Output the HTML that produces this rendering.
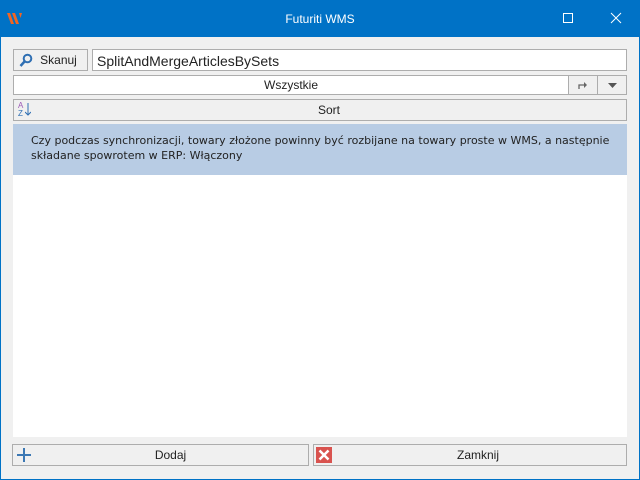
<!DOCTYPE html>
<html><head><meta charset="utf-8"><style>
*{margin:0;padding:0;box-sizing:border-box}
body{width:640px;height:480px;overflow:hidden;background:#0072c6;font-family:"Liberation Sans",sans-serif;font-size:12px;color:#222}
.title{position:absolute;left:0;top:0;width:640px;height:37px;background:#0072c6;color:#fff}
.title .t{position:absolute;left:0;width:640px;top:12px;text-align:center;font-size:12px}
.win{position:absolute;left:1px;top:37px;width:638px;height:442px;background:#f0f0f0}
.b{position:absolute;border:1px solid #adadad;background:#f0f0f0}
.w{background:#fff}
.c{display:flex;align-items:center;justify-content:center}
</style></head><body>
<div class="title">
<svg style="position:absolute;left:6px;top:10px" width="18" height="16" viewBox="0 0 18 16"><g fill="#f26522"><path d="M1 3h3l4 11h-3z"/><path d="M6 3h3l4 11h-3z"/><path d="M13 3h3l-1.5 5z"/></g></svg>
<div class="t">Futuriti WMS</div>
<div style="position:absolute;left:563px;top:13px;width:10px;height:10px;border:1px solid #fff"></div>
<svg style="position:absolute;left:610px;top:12px" width="12" height="12"><path d="M1 1L11 11M11 1L1 11" stroke="#fff" stroke-width="1"/></svg>
</div>
<div class="win">
<div class="b c" style="left:12px;top:12px;width:75px;height:22px">
<svg style="position:absolute;left:5px;top:3px" width="14" height="15"><circle cx="8.5" cy="5.5" r="3.8" fill="none" stroke="#2f6fb3" stroke-width="2"/><path d="M6 8L1.5 13" stroke="#2f6fb3" stroke-width="2.5"/></svg>
<span style="margin-left:16px">Skanuj</span></div>
<div class="b w" style="left:91px;top:12px;width:535px;height:22px;font-size:14px;padding:3px 4px">SplitAndMergeArticlesBySets</div>
<div class="b w c" style="left:12px;top:38px;width:556px;height:20px">Wszystkie</div>
<div class="b c" style="left:567px;top:38px;width:30px;height:20px"><svg width="10" height="9"><path d="M1 8V4h6" stroke="#666" fill="none" stroke-width="1.3"/><path d="M6 1l3 3-3 3z" fill="#666"/></svg></div>
<div class="b c" style="left:596px;top:38px;width:30px;height:20px"><svg width="9" height="5"><path d="M0 0h9L4.5 5z" fill="#555"/></svg></div>
<div class="b c" style="left:12px;top:62px;width:614px;height:22px;padding-left:18px">Sort
<div style="position:absolute;left:4px;top:2px;font-size:8px;line-height:8px;color:#9b59b6">A<br><span style="color:#2f6fb3">Z</span></div>
<svg style="position:absolute;left:11px;top:3px" width="6" height="14"><path d="M3 0v12M0 9l3 3 3-3" stroke="#2f6fb3" fill="none"/></svg></div>
<div style="position:absolute;left:12px;top:87px;width:614px;height:313px;background:#fff"></div>
<div style="position:absolute;left:12px;top:87px;width:614px;height:51px;background:#b8cce4;padding:9px 0 0 18px;line-height:15px;font-family:'DejaVu Sans',sans-serif;font-size:11px;color:#222">Czy podczas synchronizacji, towary złożone powinny być rozbijane na towary proste w WMS, a następnie<br>składane spowrotem w ERP: Włączony</div>
<div class="b c" style="left:11px;top:407px;width:297px;height:22px;padding-left:20px">Dodaj
<svg style="position:absolute;left:3px;top:2px" width="16" height="16"><path d="M8 1v14M1 8h14" stroke="#3c78b4" stroke-width="2"/></svg></div>
<div class="b c" style="left:312px;top:407px;width:314px;height:22px;padding-left:16px">Zamknij
<svg style="position:absolute;left:2px;top:2px" width="16" height="16"><rect width="16" height="16" fill="#d9534f"/><path d="M3.5 3.5l9 9M12.5 3.5l-9 9" stroke="#fff" stroke-width="2.5"/></svg></div>
</div>
</body></html>
